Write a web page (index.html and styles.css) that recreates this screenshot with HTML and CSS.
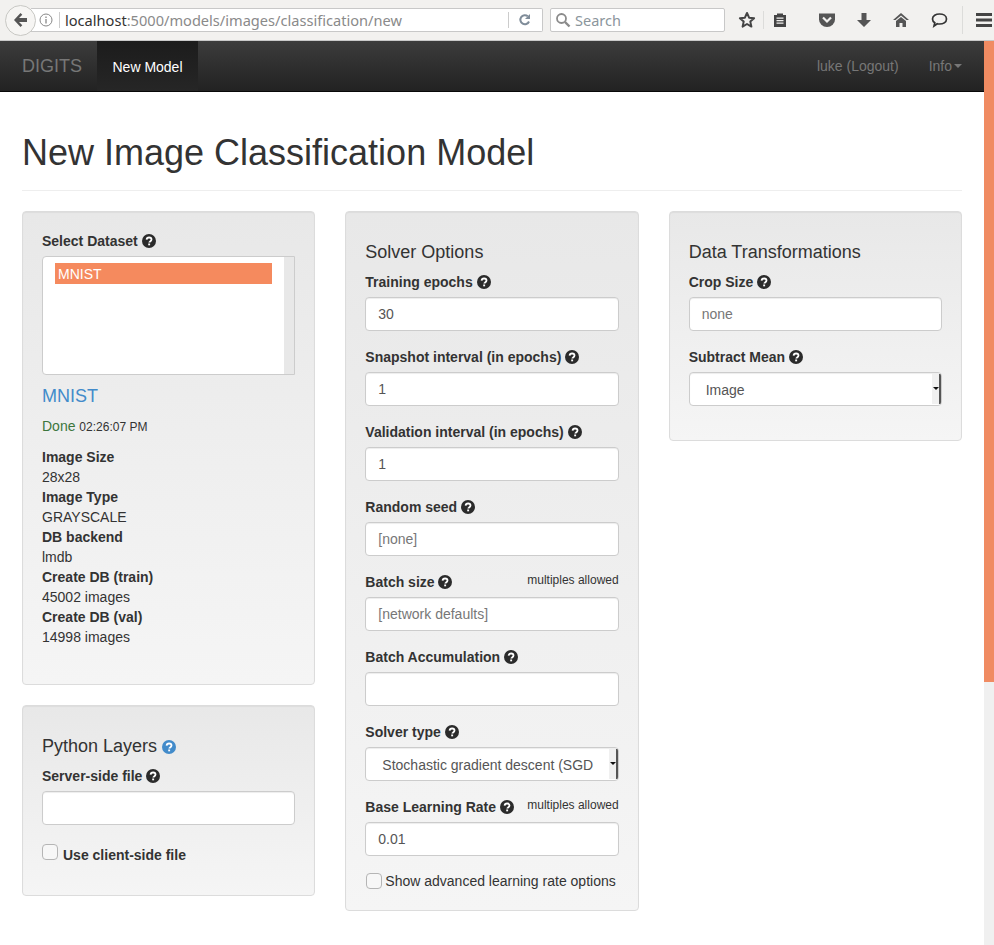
FILE: index.html
```html
<!DOCTYPE html>
<html lang="en">
<head>
<meta charset="utf-8">
<title>New Image Classification Model</title>
<link rel="stylesheet" href="styles.css">
</head>
<body>
<svg class="defs" width="0" height="0" aria-hidden="true">
  <symbol id="q" viewBox="0 0 14 14">
    <circle cx="7" cy="7" r="7" fill="currentColor"/>
    <path d="M4.6 5.6C4.7 4.2 5.7 3.5 7.1 3.5c1.4 0 2.4.8 2.4 2 0 1-.6 1.5-1.3 1.9-.6.4-.9.6-.9 1.2" fill="none" stroke="#fff" stroke-width="1.8"/>
    <rect x="6.2" y="9.5" width="1.9" height="1.8" fill="#fff"/>
  </symbol>
</svg>
<header class="toolbar">
  <div class="back">
    <svg width="18" height="16" viewBox="0 0 18 16"><path d="M8.5 1 2 8l6.500 7 1.800-1.800L7 10h8V6H7l3.300-3.200z" fill="#555"/></svg>
  </div>
  <div class="urlbar">
    <svg class="info" width="14" height="14" viewBox="0 0 14 14"><circle cx="7" cy="7" r="6" fill="none" stroke="#888"/><path d="M7 6v4.500M7 3.500v1.500" stroke="#888" stroke-width="1.300"/></svg>
    <span class="urlsep"></span>
    <span class="url"><b>localhost</b>:5000/models/images/classification/new</span>
    <span class="urlsep right"></span>
    <svg class="reload" width="14" height="14" viewBox="0 0 14 14"><path d="M11 8.500A4.500 4.500 0 1 1 9.800 3.300" fill="none" stroke="#7f8c99" stroke-width="2"/><path d="M12 1v5H7z" fill="#7f8c99"/></svg>
  </div>
  <div class="searchbar">
    <svg width="16" height="16" viewBox="0 0 16 16"><circle cx="6.500" cy="6.500" r="4.500" fill="none" stroke="#8b8b8b" stroke-width="1.800"/><path d="m10 10 4.500 4.500" stroke="#8b8b8b" stroke-width="2.400"/></svg>
    <span>Search</span>
  </div>
  <div class="tools">
    <svg class="t-star" width="18" height="18" viewBox="0 0 18 18"><path d="m9 2 2.100 4.700 5 .5-3.800 3.400 1.100 5L9 13l-4.400 2.600 1.100-5L1.900 7.200l5-.5z" fill="none" stroke="#444" stroke-width="2" stroke-linejoin="round"/></svg>
    <span class="t-sep"></span>
    <svg class="t-list" width="16" height="16" viewBox="0 0 16 16"><path d="M2 3h3V1.500h6V3h3v12H2z" fill="#444"/><path d="M4.500 6.200h7M4.500 8.700h7M4.500 11.200h7" stroke="#f2f1ef" stroke-width="1.200"/></svg>
    <svg class="t-pocket" width="18" height="16" viewBox="0 0 18 16"><path d="M1 1.500h16v6a8 7.500 0 0 1-16 0z" fill="#555"/><path d="m5 5.500 4 4 4-4" fill="none" stroke="#f2f1ef" stroke-width="2.200"/></svg>
    <svg class="t-down" width="16" height="16" viewBox="0 0 16 16"><path d="M5.500 1h5v7H15l-7 7-7-7h4.500z" fill="#555"/></svg>
    <svg class="t-home" width="18" height="16" viewBox="0 0 18 16"><path d="M9 1 1 8h2.500L9 3.500 14.500 8H17z" fill="#555"/><path d="M4 9 9 5l5 4v6h-3.500v-4h-3v4H4z" fill="#555"/></svg>
    <svg class="t-chat" width="17" height="16" viewBox="0 0 17 16"><path d="M8.500 2C12 2 15.500 3.700 15.500 7s-3.500 5-7 5c-.8 0-1.500 0-2.200-.2L3 14l.8-3.300C2.300 9.800 1.500 8.500 1.500 7c0-3.300 3.500-5 7-5z" fill="none" stroke="#333" stroke-width="1.700"/></svg>
    <span class="t-sep wide"></span>
    <svg class="t-menu" width="16" height="14" viewBox="0 0 16 14"><path d="M0 0h16v3H0zM0 5.500h16v3H0zM0 11h16v3H0z" fill="#444"/></svg>
  </div>
</header>

<div class="viewport">
  <div class="page">
    <nav class="navbar">
      <a class="brand">DIGITS</a>
      <a class="nav-active">New Model</a>
      <div class="nav-right">
        <a class="nav-link">luke (Logout)</a>
        <a class="nav-link">Info<i class="caret"></i></a>
      </div>
    </nav>

    <main class="container">
      <h1 class="title">New Image Classification Model</h1>
      <div class="columns">
        <div class="col">
          <section class="well ds-well">
            <label class="lbl">Select Dataset <svg class="help"><use href="#q"/></svg></label>
            <div class="listbox">
              <div class="list-body"><div class="option">MNIST</div></div>
              <div class="list-scroll"></div>
            </div>
            <a class="ds-name">MNIST</a>
            <p class="status"><span class="done">Done</span> <small>02:26:07 PM</small></p>
            <dl class="facts">
              <dt>Image Size</dt><dd>28x28</dd>
              <dt>Image Type</dt><dd>GRAYSCALE</dd>
              <dt>DB backend</dt><dd>lmdb</dd>
              <dt>Create DB (train)</dt><dd>45002 images</dd>
              <dt>Create DB (val)</dt><dd>14998 images</dd>
            </dl>
          </section>
          <section class="well py-well">
            <h4 class="well-title">Python Layers <svg class="help blue"><use href="#q"/></svg></h4>
            <label class="lbl">Server-side file <svg class="help"><use href="#q"/></svg></label>
            <input class="field" type="text">
            <label class="check-bold"><input class="cb" type="checkbox"> Use client-side file</label>
          </section>
        </div>

        <section class="well col">
          <h4 class="well-title">Solver Options</h4>
          <div class="group"><label class="lbl">Training epochs <svg class="help"><use href="#q"/></svg></label><input class="field" type="text" value="30"></div>
          <div class="group"><label class="lbl">Snapshot interval (in epochs) <svg class="help"><use href="#q"/></svg></label><input class="field" type="text" value="1"></div>
          <div class="group"><label class="lbl">Validation interval (in epochs) <svg class="help"><use href="#q"/></svg></label><input class="field" type="text" value="1"></div>
          <div class="group"><label class="lbl">Random seed <svg class="help"><use href="#q"/></svg></label><input class="field" type="text" placeholder="[none]"></div>
          <div class="group"><label class="lbl">Batch size <svg class="help"><use href="#q"/></svg><small class="multi">multiples allowed</small></label><input class="field" type="text" placeholder="[network defaults]"></div>
          <div class="group"><label class="lbl">Batch Accumulation <svg class="help"><use href="#q"/></svg></label><input class="field" type="text"></div>
          <div class="group"><label class="lbl">Solver type <svg class="help"><use href="#q"/></svg></label>
            <div class="select-wrap"><span class="select-text">Stochastic gradient descent (SGD</span><span class="select-arrow"></span></div></div>
          <div class="group"><label class="lbl">Base Learning Rate <svg class="help"><use href="#q"/></svg><small class="multi">multiples allowed</small></label><input class="field" type="text" value="0.01"></div>
          <label class="check"><input class="cb" type="checkbox"><span>Show advanced learning rate options</span></label>
        </section>

        <div class="col">
          <section class="well">
            <h4 class="well-title">Data Transformations</h4>
            <div class="group"><label class="lbl">Crop Size <svg class="help"><use href="#q"/></svg></label><input class="field" type="text" placeholder="none"></div>
            <div class="group last"><label class="lbl">Subtract Mean <svg class="help"><use href="#q"/></svg></label>
              <div class="select-wrap"><span class="select-text">Image</span><span class="select-arrow"></span></div></div>
          </section>
        </div>
      </div>
    </main>
  </div>
  <div class="scrollbar"><div class="thumb"></div></div>
</div>
</body>
</html>
```
FILE: styles.css
```css
* { box-sizing: border-box; }
html, body { margin: 0; height: 100%; overflow: hidden; }
body { font-family: "Liberation Sans", Arial, sans-serif; font-size: 14px; line-height: 20px; color: #333; background: #fff; }
.defs { position: absolute; }

.toolbar { height: 41px; display: flex; align-items: center; position: relative; background: #f2f1ef; border-bottom: 1px solid #c9c9c9; padding-left: 5px; }
.back { width: 31px; height: 31px; border-radius: 50%; border: 1px solid #c8c8c4; background: #f6f5f3; display: flex; align-items: center; justify-content: center; position: relative; z-index: 1; flex: none; }
.urlbar { width: 512px; height: 24px; margin-left: -5px; background: #fff; border: 1px solid #c8c8c8; border-left: 0; border-radius: 0 2px 2px 0; display: flex; align-items: center; padding-left: 8px; flex: none; }
.info { flex: none; }
.urlsep { width: 1px; height: 16px; background: #ccc; margin: 0 5px 0 6px; flex: none; }
.urlsep.right { margin: 0 9px 0 auto; }
.url { font-family: "Noto Sans", sans-serif; font-size: 14.600px; color: #8a8a8a; white-space: nowrap; line-height: 22px; }
.url b { font-weight: 400; color: #333; }
.reload { margin-right: 10px; flex: none; }
.searchbar { width: 175px; height: 24px; margin-left: 7px; background: #fff; border: 1px solid #c8c8c8; border-radius: 2px; display: flex; align-items: center; gap: 4px; padding-left: 4px; font-family: "Noto Sans", sans-serif; font-size: 14.500px; color: #8b959c; flex: none; }
.tools { display: flex; align-items: center; margin-left: 13px; flex: none; }
.t-star { margin-right: 7px; }
.t-sep { width: 1px; height: 18px; background: #dcdcda; }
.t-sep.wide { height: 28px; margin-left: 14px; }
.t-list { margin-left: 8px; }
.t-pocket { margin-left: 30px; }
.t-down { margin-left: 20px; }
.t-home { margin-left: 20px; }
.t-chat { margin-left: 21px; }
.t-menu { margin-left: 13px; }

.viewport { height: 904px; display: flex; }
.page { width: 984px; flex: none; }
.scrollbar { width: 10px; flex: none; background: #f0f0f0; }
.thumb { height: 641px; background: #f08b62; }

.navbar { height: 51px; display: flex; align-items: stretch; padding-left: 22px; background: linear-gradient(#3c3c3c, #222); border-bottom: 1px solid #080808; color: #777; }
.brand { font-size: 18px; line-height: 50px; width: 75px; }
.nav-active { width: 101px; line-height: 52px; text-align: center; color: #fff; background: linear-gradient(#1c1c1c, #262626); }
.nav-right { margin-left: auto; display: flex; gap: 30px; padding-right: 22px; line-height: 52px; }
.nav-link { display: flex; align-items: center; }
.caret { display: inline-block; margin-left: 2px; border-top: 4px solid #777; border-left: 4px solid transparent; border-right: 4px solid transparent; }

.container { padding: 0 22px; }
.title { font-size: 36px; line-height: 40px; font-weight: 500; margin: 0 0 20px; padding: 41px 0 17px; border-bottom: 1px solid #eee; height: 99px; font-weight: 400; }
.columns { display: grid; grid-template-columns: repeat(3, 1fr); gap: 30px; align-items: start; }
.well { padding: 19px; border: 1px solid #dcdcdc; border-radius: 4px; background: linear-gradient(#e8e8e8, #f5f5f5); box-shadow: inset 0 1px 1px rgba(0,0,0,.05); margin-bottom: 20px; }
.lbl { display: flex; align-items: center; font-weight: 700; margin-bottom: 5px; height: 20px; white-space: pre-wrap; }
.help { width: 14px; height: 14px; color: #2b2b2b; flex: none; vertical-align: -2px; margin-left: 0; }
.help.blue { color: #428bca; }
.multi { margin-left: auto; font-weight: 400; font-size: 12px; line-height: 16px; align-self: flex-start; margin-top: 0; }
.well-title { font-size: 18px; line-height: 20px; font-weight: 400; margin: 11px 0 10px; height: 20px; }
.field { display: block; width: 100%; height: 34px; padding: 6px 12px; font: 14px/20px "Liberation Sans", Arial, sans-serif; color: #555; background: #fff; border: 1px solid #ccc; border-radius: 4px; box-shadow: inset 0 1px 1px rgba(0,0,0,.075); outline: 0; }
.field::placeholder { color: #777; opacity: 1; }
.group { margin-bottom: 16px; }
.group.last { margin-bottom: 15px; }

.ds-well { height: 474px; }
.listbox { display: flex; height: 119px; background: #fff; border: 1px solid #ccc; border-radius: 4px 0 0 4px; }
.list-body { flex: 1; padding: 6px 12px; }
.option { height: 21px; line-height: 22px; padding-left: 3px; background: #f58a5e; color: #fff; }
.list-scroll { width: 10px; background: #e8e8e8; }
.ds-name { display: block; font-size: 18px; line-height: 20px; color: #428bca; margin: 11px 0 10px; }
.status { margin: 0 0 10px; line-height: 20px; }
.done { color: #3c763d; }
.status small { font-size: 12px; color: #333; }
.facts { margin: 0; }
.facts dt { font-weight: 700; }
.facts dd { margin: 0; }

.py-well { height: 191px; }
.check-bold { display: flex; align-items: center; font-weight: 700; margin-top: 20px; gap: 5px; height: 20px; }
.cb { appearance: none; width: 16px; height: 16px; margin: 0; border: 1px solid #b5b5b5; border-radius: 4px; background: #f7f7f7; flex: none; }
.check-bold .cb { position: relative; top: -3px; }
.check { display: flex; gap: 3px; margin-top: -1px; padding-left: 1px; }
.check .cb { margin-top: 2px; }

.select-wrap { display: flex; align-items: center; height: 34px; border: 1px solid #ccc; border-radius: 4px; background: #fff; box-shadow: inset 0 1px 1px rgba(0,0,0,.075); color: #555; padding-left: 16px; overflow: hidden; position: relative; }
.select-text { white-space: nowrap; position: relative; top: 1px; }
.select-arrow { position: absolute; right: 0; top: 1px; bottom: 1px; width: 9px; background: #f0f0f0; border-right: 2px solid #555; }
.select-arrow::after { content: ""; position: absolute; top: 13px; left: 1px; border-top: 3px solid #111; border-left: 3px solid transparent; border-right: 3px solid transparent; }
```
